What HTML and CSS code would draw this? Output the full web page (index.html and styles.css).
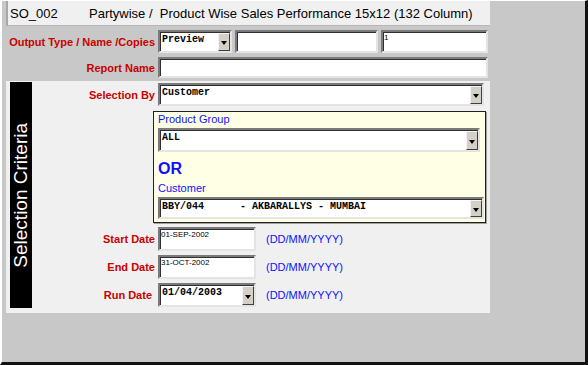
FILE: index.html
```html
<!DOCTYPE html>
<html>

<head>
    <meta charset="utf-8">
    <title>SO_002 Sales Performance</title>
    <link rel="stylesheet" href="styles.css">
</head>

<body>
    <div id="window">
        <div class="title">
            <span class="code">SO_002</span>
            <span>Partywise /&nbsp; Product Wise Sales Performance 15x12 (132 Column)</span>
        </div>

        <div class="row row-output">
            <label class="lbl">Output Type / Name /Copies</label>
            <div class="combo w-type"><span class="val">Preview</span><span class="btn"></span></div>
            <div class="field w-name"></div>
            <div class="field w-copies"><span class="small">1</span></div>
        </div>

        <div class="row row-report">
            <label class="lbl">Report Name</label>
            <div class="field w-report"></div>
        </div>

        <div class="panel">
            <div class="band"><span>Selection Criteria</span></div>
            <div class="criteria">
                <div class="row row-selby">
                    <label class="lbl">Selection By</label>
                    <div class="combo w-selby"><span class="val">Customer</span><span class="btn"></span></div>
                </div>

                <div class="choice">
                    <div class="blue">Product Group</div>
                    <div class="combo w-group"><span class="val">ALL</span><span class="btn"></span></div>
                    <div class="or">OR</div>
                    <div class="blue">Customer</div>
                    <div class="combo w-cust"><span class="val">BBY/044      - AKBARALLYS - MUMBAI</span><span class="btn"></span></div>
                </div>

                <div class="row row-date">
                    <label class="lbl">Start Date</label>
                    <div class="field w-date"><span class="small">01-SEP-2002</span></div>
                    <span class="fmt">(DD/MM/YYYY)</span>
                </div>
                <div class="row row-date">
                    <label class="lbl">End Date</label>
                    <div class="field w-date"><span class="small">31-OCT-2002</span></div>
                    <span class="fmt">(DD/MM/YYYY)</span>
                </div>
                <div class="row row-date">
                    <label class="lbl lbl-run">Run Date</label>
                    <div class="combo w-date"><span class="val">01/04/2003</span><span class="btn"></span></div>
                    <span class="fmt">(DD/MM/YYYY)</span>
                </div>
            </div>
        </div>
    </div>
</body>

</html>
```

FILE: styles.css
```css
* {
    margin: 0;
    padding: 0;
    box-sizing: border-box;
}

body {
    font: 11px "Liberation Sans", Arial, sans-serif;
    background: #c8c8c8;
}

#window {
    width: 588px;
    height: 365px;
    background: #c8c8c8;
    border-top: 1px solid #fff;
    border-left: 2px solid #fff;
    border-right: 3px solid #111;
    border-bottom: 3px solid #111;
    padding-left: 4px;
}

.title {
    display: flex;
    align-items: center;
    width: 484px;
    height: 25px;
    background: #f0f0f0;
    border-left: 2px solid #a8a8a8;
    border-bottom: 1px solid #b8b8b8;
    font-size: 13px;
    color: #000;
}

.title .code {
    width: 81px;
    padding-left: 2px;
}

/* rows */
.row {
    display: flex;
    align-items: center;
}

.lbl {
    width: 152px;
    padding-right: 3px;
    text-align: right;
    font-weight: 700;
    color: #c80000;
    white-space: nowrap;
}

.row-output {
    margin-top: 4px;
    height: 23px;
}

.row-output .combo,
.row-output .field {
    height: 23px;
    margin-right: 3px;
}

.row-report {
    margin-top: 4px;
    height: 21px;
}

.row-report .field {
    height: 21px;
}

/* inputs */
.field,
.combo {
    position: relative;
    background: #fff;
    border: 2px solid;
    border-color: #7a7a7a #e4e4e4 #e4e4e4 #7a7a7a;
    box-shadow: inset 1px 1px 0 #303030;
}

.val {
    display: block;
    padding: 2px 0 0 2px;
    font: 700 10px/12px "Liberation Mono", "Courier New", monospace;
    white-space: pre;
    color: #000;
}

.small {
    display: block;
    padding: 1px 0 0 1px;
    font-size: 8px;
    line-height: 10px;
    color: #000;
}

.combo .btn {
    position: absolute;
    top: 1px;
    right: 0;
    bottom: 0;
    width: 12px;
    background: #d4d0c8;
    border: 1px solid;
    border-color: #f4f4f4 #404040 #404040 #f4f4f4;
}

.combo .btn::after {
    content: "";
    position: absolute;
    left: 2px;
    top: 50%;
    margin-top: -1px;
    border-left: 3px solid transparent;
    border-right: 3px solid transparent;
    border-top: 4px solid #000;
}

.w-type { width: 74px; }
.w-name { width: 143px; }
.w-copies { width: 107px; }
.w-report { width: 330px; }
.w-selby { width: 326px; height: 23px; }
.w-group { width: 322px; height: 24px; }
.w-cust { width: 326px; height: 22px; }
.w-date { width: 98px; height: 24px; }

/* selection panel */
.panel {
    display: flex;
    width: 484px;
    height: 232px;
    margin-top: 3px;
    background: #f0f0f0;
}

.band {
    display: flex;
    align-items: center;
    justify-content: center;
    width: 22px;
    height: 226px;
    margin: 1px 0 0 4px;
    background: #000;
}

.band span {
    writing-mode: vertical-rl;
    transform: rotate(180deg);
    color: #fff;
    font-size: 19px;
    white-space: nowrap;
}

.criteria {
    flex: 1;
}

.criteria .lbl {
    width: 126px;
}

.row-selby {
    margin-top: 2px;
}

.choice {
    width: 333px;
    height: 112px;
    margin: 5px 0 0 121px;
    padding: 1px 0 0 4px;
    background: #ffffe6;
    border: 1px solid #202020;
    box-shadow: 1px 1px 0 #a0a0a0;
}

.blue {
    color: #1010ff;
    font-size: 11px;
    line-height: 13px;
}

.w-group {
    margin-top: 2px;
}

.or {
    margin-top: 8px;
    color: #1010ff;
    font: 700 16px/18px "Liberation Sans", Arial, sans-serif;
}

.or + .blue {
    margin-top: 4px;
}

.choice .w-cust {
    margin-top: 2px;
}

.row-date {
    height: 24px;
    margin-top: 4px;
}

.row-date:nth-of-type(1) {
    margin-top: 3px;
}

.lbl-run {
    padding-right: 6px;
}

.fmt {
    margin-left: 10px;
    color: #1010ff;
    font-size: 11px;
}
```
